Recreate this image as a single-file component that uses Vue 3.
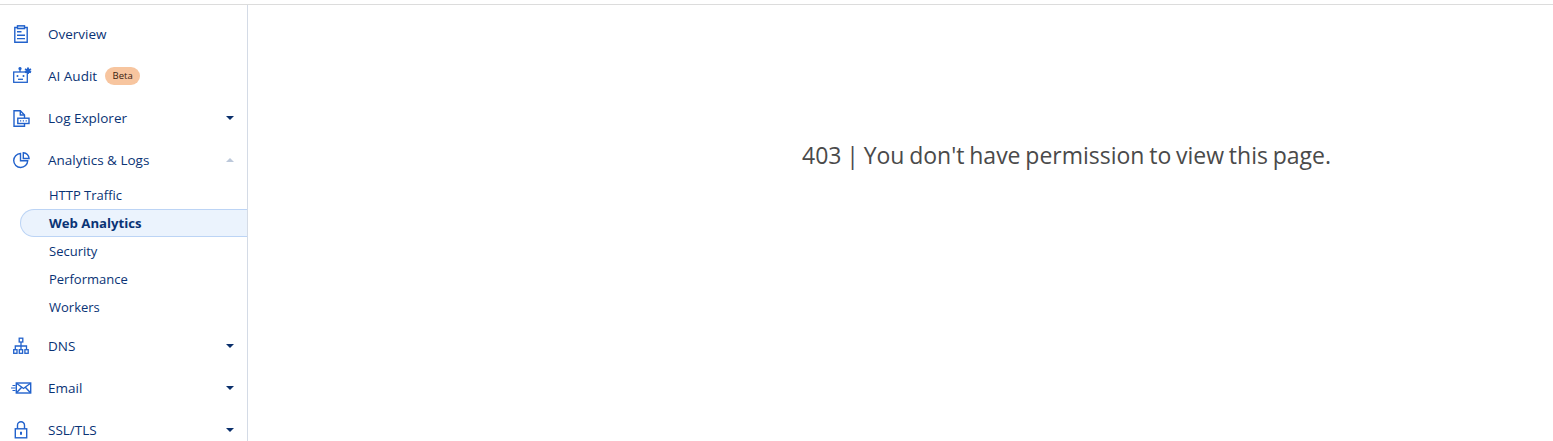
<script setup>
const subItems = [
  { label: 'HTTP Traffic', active: false },
  { label: 'Web Analytics', active: true },
  { label: 'Security', active: false },
  { label: 'Performance', active: false },
  { label: 'Workers', active: false },
]
</script>

<template>
  <div class="page">
    <aside class="sidebar">
      <nav class="nav">
        <div class="row">
          <span class="icon">
            <svg width="22" height="22" viewBox="0 0 22 22" fill="none" stroke="currentColor" stroke-width="1.400">
              <path d="M7 4.500H4.800v14.700h12.400V4.500H15" />
              <rect x="7.500" y="2.800" width="7" height="2.800" fill="#cfe0f8" />
              <path d="M7 8.700h4.500M7 12.200h8M7 15.600h8" />
            </svg>
          </span>
          <span class="label">Overview</span>
        </div>
        <div class="row">
          <span class="icon">
            <svg width="22" height="22" viewBox="0 0 22 22" fill="none" stroke="currentColor" stroke-width="1.300">
              <rect x="3.700" y="7" width="13.600" height="10.300" />
              <path d="M10 7V4.500" />
              <circle cx="10" cy="3.600" r="1" fill="currentColor" />
              <circle cx="7.500" cy="11" r="1" fill="currentColor" stroke="none" />
              <circle cx="13.500" cy="11" r="1" fill="currentColor" stroke="none" />
              <path d="M8 14.300h5" />
              <path d="M18 2.500v6.500M15 4.200l6 3.200M15 7.400l6-3.200" stroke-width="1.900" />
            </svg>
          </span>
          <span class="label">AI Audit</span>
          <span class="badge">Beta</span>
        </div>
        <div class="row">
          <span class="icon">
            <svg width="22" height="22" viewBox="0 0 22 22" fill="none" stroke="currentColor" stroke-width="1.400">
              <path d="M14.500 16v3.200H4V3.800h6.300l4.200 4.200V11" />
              <path d="M10.300 3.800V8h4.200" />
              <rect x="7.800" y="11.200" width="11.200" height="5.300" fill="#fff" />
              <path d="M10 13.900h1.200M12.800 13.900h1.200M15.600 13.900h1.200" />
            </svg>
          </span>
          <span class="label">Log Explorer</span>
          <span class="caret"></span>
        </div>
        <div class="row">
          <span class="icon">
            <svg width="22" height="22" viewBox="0 0 22 22" fill="none" stroke="currentColor" stroke-width="1.400">
              <path d="M10.500 4.500a7 7 0 1 0 7.200 7.200H10.500z" />
              <path d="M13.300 3.700a6 6 0 0 1 5.800 5.800h-5.800z" />
            </svg>
          </span>
          <span class="label">Analytics &amp; Logs</span>
          <span class="caret up"></span>
        </div>
        <div class="subnav">
          <div
            v-for="item in subItems"
            :key="item.label"
            class="subitem"
            :class="{ active: item.active }"
          >
            {{ item.label }}
          </div>
        </div>
        <div class="row">
          <span class="icon">
            <svg width="22" height="22" viewBox="0 0 22 22" fill="none" stroke="currentColor" stroke-width="1.300">
              <rect x="9.200" y="3.200" width="3.600" height="3.800" />
              <rect x="3.700" y="14.700" width="3.300" height="3.600" />
              <rect x="9.300" y="14.700" width="3.300" height="3.600" />
              <rect x="14.900" y="14.700" width="3.300" height="3.600" />
              <path d="M11 7v7.500M5.300 14.500v-3.500h11.200v3.500" />
            </svg>
          </span>
          <span class="label">DNS</span>
          <span class="caret"></span>
        </div>
        <div class="row">
          <span class="icon">
            <svg width="22" height="22" viewBox="0 0 22 22" fill="none" stroke="currentColor" stroke-width="1.400">
              <rect x="6.300" y="6" width="14.400" height="10" />
              <path d="M6.500 6.300l7 5.200 7-5.200M6.500 15.700l5.200-5.500M20.500 15.700l-5.200-5.500" />
              <path d="M2.500 8.500h3M1 11h4.500M2.500 13.500h3" stroke-width="1.200" />
            </svg>
          </span>
          <span class="label">Email</span>
          <span class="caret"></span>
        </div>
        <div class="row">
          <span class="icon">
            <svg width="22" height="22" viewBox="0 0 22 22" fill="none" stroke="currentColor" stroke-width="1.400">
              <rect x="5.300" y="9.800" width="11.400" height="9" />
              <path d="M7.500 9.800V6.300a3.500 3.500 0 0 1 7 0v3.500" />
              <path d="M11 12.800v3" stroke-width="2" />
            </svg>
          </span>
          <span class="label">SSL/TLS</span>
          <span class="caret"></span>
        </div>
      </nav>
    </aside>
    <main class="main">
      <p class="message">403 | You don't have permission to view this page.</p>
    </main>
  </div>
</template>

<style>
html,
body {
  margin: 0;
  background: #fff;
  overflow: hidden;
}
</style>

<style scoped>
.page {
  display: flex;
  height: 441px;
  margin-top: 4px;
  border-top: 1px solid #dcdcdc;
  box-sizing: border-box;
  overflow: hidden;
  font-family: "Open Sans", "Noto Sans", sans-serif;
}
.sidebar {
  width: 248px;
  flex: none;
  box-sizing: border-box;
  border-right: 1px solid #d4dbe6;
  padding-top: 8px;
}
.nav {
  display: flex;
  flex-direction: column;
}
.row {
  display: flex;
  align-items: center;
  height: 42px;
  flex: none;
  padding-left: 10px;
  padding-right: 12px;
  font-size: 13.500px;
}
.icon {
  display: flex;
  width: 22px;
  height: 22px;
  margin-right: 16px;
  color: #2262cc;
  flex: none;
}
.label {
  color: #0a3375;
  white-space: nowrap;
}
.badge {
  margin-left: 8px;
  padding: 0 7.500px;
  height: 18px;
  line-height: 18px;
  border-radius: 9px;
  background: #f7c59f;
  color: #3a2210;
  font-size: 9.500px;
}
.caret {
  margin-left: auto;
  margin-right: 1.500px;
  width: 0;
  height: 0;
  border-left: 4.500px solid transparent;
  border-right: 4.500px solid transparent;
  border-top: 4.500px solid #0a2f6b;
}
.caret.up {
  border-top: 0;
  border-bottom: 4.500px solid #bcc8da;
}
.subnav {
  display: flex;
  flex-direction: column;
  padding-left: 20px;
  padding-bottom: 4px;
}
.subitem {
  height: 28px;
  line-height: 28px;
  box-sizing: border-box;
  padding-left: 29px;
  color: #0a3375;
  font-size: 13px;
}
.subitem.active {
  background: #ebf3fd;
  border: 1px solid #bcd4f5;
  border-right: 0;
  border-radius: 14px 0 0 14px;
  padding-left: 28px;
  line-height: 26px;
  font-size: 13.200px;
  font-weight: 700;
  color: #0a3375;
}
.main {
  flex: 1;
  padding-top: 134px;
  padding-left: 554px;
}
.message {
  margin: 0;
  font-size: 23px;
  word-spacing: -1.200px;
  line-height: 32px;
  color: #4a4a4a;
  white-space: nowrap;
}
</style>
